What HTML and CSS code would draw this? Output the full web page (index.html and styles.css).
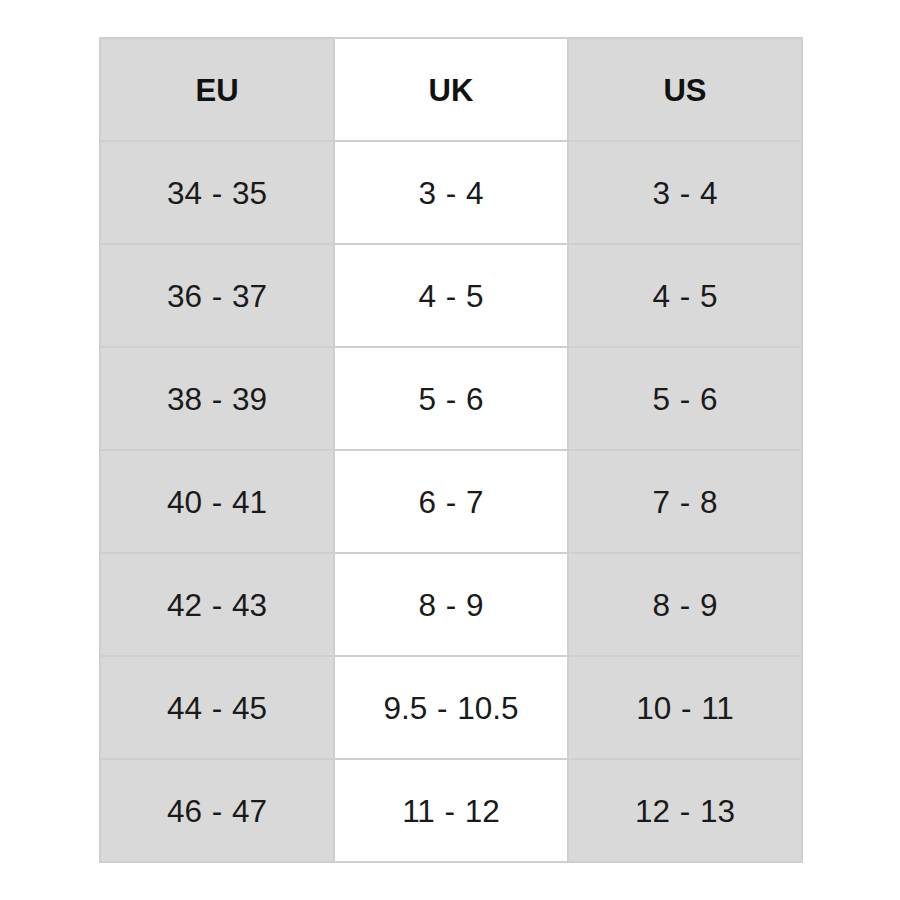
FILE: index.html
```html
<!DOCTYPE html>
<html>
<head>
<meta charset="utf-8">
<link rel="stylesheet" href="styles.css">
</head>
<body>
<div class="chart">
  <div class="cell gray head">EU</div>
  <div class="cell white head">UK</div>
  <div class="cell gray head">US</div>

  <div class="cell gray">34 - 35</div>
  <div class="cell white">3 - 4</div>
  <div class="cell gray">3 - 4</div>

  <div class="cell gray">36 - 37</div>
  <div class="cell white">4 - 5</div>
  <div class="cell gray">4 - 5</div>

  <div class="cell gray">38 - 39</div>
  <div class="cell white">5 - 6</div>
  <div class="cell gray">5 - 6</div>

  <div class="cell gray">40 - 41</div>
  <div class="cell white">6 - 7</div>
  <div class="cell gray">7 - 8</div>

  <div class="cell gray">42 - 43</div>
  <div class="cell white">8 - 9</div>
  <div class="cell gray">8 - 9</div>

  <div class="cell gray">44 - 45</div>
  <div class="cell white">9.5 - 10.5</div>
  <div class="cell gray">10 - 11</div>

  <div class="cell gray">46 - 47</div>
  <div class="cell white">11 - 12</div>
  <div class="cell gray">12 - 13</div>
</div>
</body>
</html>
```
FILE: styles.css
```css
html, body {
  margin: 0;
  padding: 0;
  background: #ffffff;
}
body {
  padding: 37px 0 0 99px;
  font-family: "Liberation Sans", Arial, sans-serif;
}
.chart {
  display: grid;
  grid-template-columns: repeat(3, 232px);
  grid-auto-rows: 101px;
  gap: 2px;
  padding: 2px;
  width: max-content;
  background: #cfcfcf;
}
.cell {
  display: flex;
  align-items: center;
  justify-content: center;
  padding-top: 2px;
  font-size: 31.5px;
  word-spacing: 1px;
  color: #1a1a1a;
}
.gray {
  background: #d9d9d9;
}
.white {
  background: #ffffff;
}
.head {
  font-weight: bold;
  font-size: 31px;
  color: #111111;
}
```
